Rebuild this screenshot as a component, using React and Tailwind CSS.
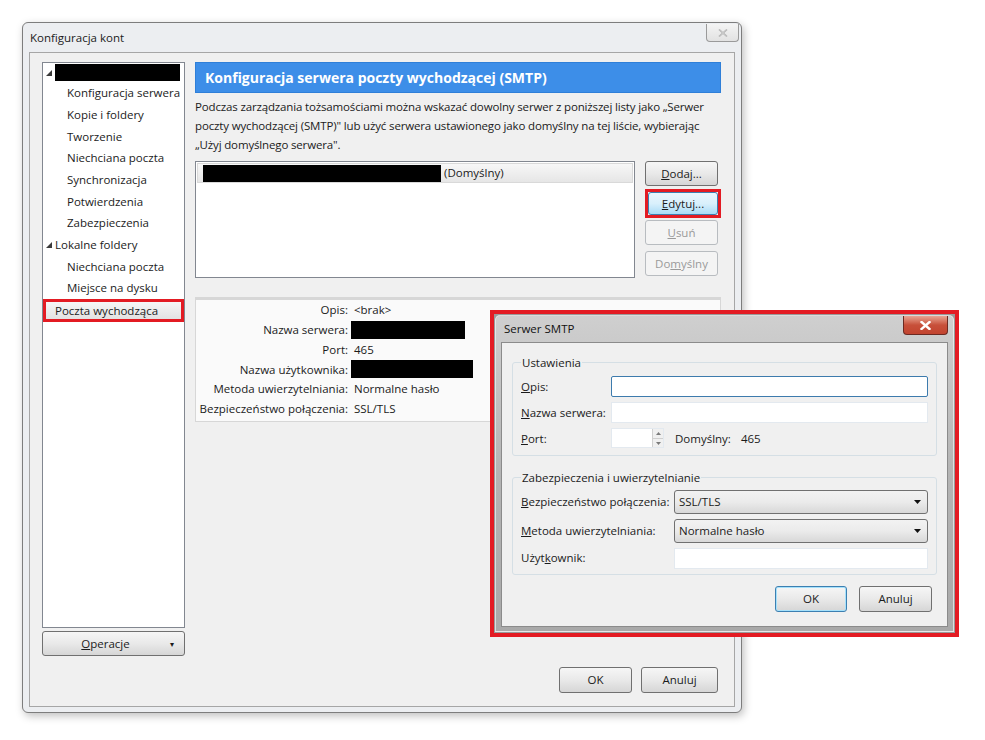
import { useState } from "react";

const font = "font-['Open_Sans','Noto_Sans',sans-serif]";

const Tri = ({ className = "" }) => (
  <svg width="6" height="6" viewBox="0 0 6 6" className={className}>
    <polygon points="6,0 6,6 0,6" fill="#3a3a3a" />
  </svg>
);

const Caret = () => (
  <svg width="7" height="4" viewBox="0 0 7 4">
    <polygon points="0,0 7,0 3.5,4" fill="#111" />
  </svg>
);

const Btn = ({ children, className = "", variant = "normal" }) => {
  const styles = {
    normal:
      "border-[#707070] bg-linear-to-b from-[#f6f6f6] via-[#e9e9e9] to-[#d6d6d6] text-[#1b1b1b]",
    disabled: "border-[#b8bcc0] bg-[#f4f4f4] text-[#9a9a9a]",
    hover:
      "border-[#3c7fb1] bg-linear-to-b from-[#eaf6fd] via-[#d9f0fc] to-[#a9dbf6] text-[#1b1b1b]",
    focus:
      "border-[#3c7fb1] bg-linear-to-b from-[#f6f6f6] via-[#e9e9e9] to-[#d6d6d6] text-[#1b1b1b] shadow-[inset_0_0_0_1px_#a6e1fb]",
  };
  return (
    <button
      className={`flex items-center justify-center rounded-[3px] border text-[11.5px] ${styles[variant]} ${className}`}
    >
      {children}
    </button>
  );
};

const treeItems = [
  { label: "Konfiguracja serwera", indent: true },
  { label: "Kopie i foldery", indent: true },
  { label: "Tworzenie", indent: true },
  { label: "Niechciana poczta", indent: true },
  { label: "Synchronizacja", indent: true },
  { label: "Potwierdzenia", indent: true },
  { label: "Zabezpieczenia", indent: true },
  { label: "Lokalne foldery", parent: true },
  { label: "Niechciana poczta", indent: true },
  { label: "Miejsce na dysku", indent: true },
];

const details = [
  ["Opis:", "<brak>"],
  ["Nazwa serwera:", null, "w-[114px]"],
  ["Port:", "465"],
  ["Nazwa użytkownika:", null, "w-[122px]"],
  ["Metoda uwierzytelniania:", "Normalne hasło"],
  ["Bezpieczeństwo połączenia:", "SSL/TLS"],
];

const SmtpDialog = () => (
  <div className="absolute left-[490px] top-[310px] w-[469px] h-[327px] border-[4px] border-[#e31b23] bg-[#9a9a9a] p-[1px]">
    <div className="flex h-full flex-col rounded-t-[5px] border border-[#f2f2f2]/70 bg-linear-to-b from-[#cfcfcf] via-[#b4b4b4] to-[#a9a9a9] px-[5px] pb-[4px]">
      <div className="flex h-[26px] items-start justify-between">
        <span className="pt-[4px] pl-[3px] text-[11.5px] text-[#111]">Serwer SMTP</span>
        <div className="flex h-[19px] w-[45px] items-center justify-center rounded-b-[4px] border border-t-0 border-[#6b2a22] bg-linear-to-b from-[#e8a493] via-[#c7503a] to-[#c2432f] text-white">
          <svg width="11" height="9" viewBox="0 0 11 9">
            <path d="M1.5 1 L9.5 8 M9.5 1 L1.5 8" stroke="#fff" strokeWidth="2.4" strokeLinecap="square" />
          </svg>
        </div>
      </div>
      <div className="flex flex-1 flex-col border border-[#8b8b8b] bg-[#f0f0f0] px-[10px] pt-[11px]">
        <fieldset className="rounded-[3px] border border-[#d5dfe5] px-[8px] pb-[4px]">
          <legend className="px-[1px] text-[11.5px] text-[#1b1b1b]">Ustawienia</legend>
          <div className="mt-[2px] flex flex-col text-[11.5px] text-[#1b1b1b]">
            <div className="flex h-[26px] items-center">
              <span className="w-[90px]"><span className="underline">O</span>pis:</span>
              <div className="h-[21px] w-[317px] rounded-[2px] border border-[#3d7bad] bg-white" />
            </div>
            <div className="flex h-[26px] items-center">
              <span className="w-[90px]"><span className="underline">N</span>azwa serwera:</span>
              <div className="h-[21px] w-[317px] border border-[#e3e9ef] bg-white" />
            </div>
            <div className="flex h-[26px] items-center">
              <span className="w-[90px]"><span className="underline">P</span>ort:</span>
              <div className="flex h-[20px] w-[53px] border border-[#e3e9ef] bg-white">
                <div className="flex-1" />
                <div className="flex w-[11px] flex-col border-l border-[#d0d0d0] bg-[#f0f0f0]">
                  <div className="flex flex-1 items-center justify-center border-b border-[#cfcfcf]">
                    <svg width="5" height="3" viewBox="0 0 5 3"><polygon points="0,3 5,3 2.5,0" fill="#7a7a7a" /></svg>
                  </div>
                  <div className="flex flex-1 items-center justify-center">
                    <svg width="5" height="3" viewBox="0 0 5 3"><polygon points="0,0 5,0 2.5,3" fill="#7a7a7a" /></svg>
                  </div>
                </div>
              </div>
              <span className="ml-[11px]">Domyślny:</span>
              <span className="ml-[10px]">465</span>
            </div>
          </div>
        </fieldset>
        <fieldset className="mt-[13px] rounded-[3px] border border-[#d5dfe5] px-[8px] pb-[5px]">
          <legend className="px-[1px] text-[11.5px] text-[#1b1b1b]">Zabezpieczenia i uwierzytelnianie</legend>
          <div className="mt-[3px] flex flex-col gap-[5px] text-[11.5px] text-[#1b1b1b]">
            <div className="flex items-center">
              <span className="w-[153px]"><span className="underline">B</span>ezpieczeństwo połączenia:</span>
              <div className="flex h-[24px] w-[254px] items-center justify-between rounded-[3px] border border-[#707070] bg-linear-to-b from-[#f2f2f2] via-[#ebebeb] to-[#d8d8d8] pl-[4px] pr-[6px]">
                <span>SSL/TLS</span>
                <Caret />
              </div>
            </div>
            <div className="flex items-center">
              <span className="w-[153px]"><span className="underline">M</span>etoda uwierzytelniania:</span>
              <div className="flex h-[24px] w-[254px] items-center justify-between rounded-[3px] border border-[#707070] bg-linear-to-b from-[#f2f2f2] via-[#ebebeb] to-[#d8d8d8] pl-[4px] pr-[6px]">
                <span>Normalne hasło</span>
                <Caret />
              </div>
            </div>
            <div className="flex items-center">
              <span className="w-[153px]">Użyt<span className="underline">k</span>ownik:</span>
              <div className="h-[21px] w-[254px] border border-[#e3e9ef] bg-white" />
            </div>
          </div>
        </fieldset>
        <div className="mt-[11px] flex justify-end gap-[12px] pr-[5px]">
          <Btn variant="focus" className="h-[26px] w-[72px]">OK</Btn>
          <Btn className="h-[26px] w-[73px]">Anuluj</Btn>
        </div>
      </div>
    </div>
  </div>
);

export default function App() {
  const [selected] = useState("Poczta wychodząca");
  return (
    <div className={`relative h-[740px] w-[985px] overflow-hidden bg-white pl-[22px] pt-[22px] ${font}`}>
      <div className="flex h-[691px] w-[720px] flex-col rounded-[6px] border border-[#7d7d7d] bg-[#eceef1] shadow-[2px_3px_8px_rgba(0,0,0,0.25)]">
        <div className="flex h-[29px] items-start justify-between pl-[7px] pr-[2px]">
          <span className="pt-[6px] text-[11.5px] text-[#1b1b1b]">Konfiguracja kont</span>
          <div className="mt-[1px] flex h-[18px] w-[33px] items-center justify-center rounded-b-[4px] border border-t-0 border-[#9a9a9a] bg-linear-to-b from-[#f4f4f4] to-[#e2e2e2]">
            <svg width="10" height="8" viewBox="0 0 10 8">
              <path d="M1 0.5 L9 7.5 M9 0.5 L1 7.5" stroke="#a4a4a4" strokeWidth="1.5" />
              <path d="M1 0.5 L9 7.5 M9 0.5 L1 7.5" stroke="#eee" strokeWidth="0.5" />
            </svg>
          </div>
        </div>
        <div className="mx-[6px] mb-[5px] flex flex-1 flex-col border border-[#a6a6a6] bg-[#f0f0f0] pl-[12px] pr-[16px] pt-[9px] pb-[13px]">
          <div className="flex gap-[10px]">
            {/* left tree */}
            <div className="flex w-[145px] flex-col gap-[3px]">
              <div className="flex h-[566px] flex-col border border-[#828790] bg-white pt-[1px] text-[11.5px] text-[#1b1b1b]">
                <div className="flex h-[17px] items-center pl-[3px]">
                  <Tri />
                  <div className="ml-[3px] h-[17px] w-[125px] bg-black" />
                </div>
                <div className="mt-[1px] flex flex-col">
                  {treeItems.map((it, i) => (
                    <div key={i} className="flex h-[21.7px] items-center">
                      {it.parent ? (
                        <div className="flex items-center pl-[3px]">
                          <Tri />
                          <span className="ml-[3px]">{it.label}</span>
                        </div>
                      ) : (
                        <span className="pl-[24px]">{it.label}</span>
                      )}
                    </div>
                  ))}
                  <div className="flex h-[23px] items-center border-[3px] border-[#e31b23] bg-linear-to-b from-[#f6f6f6] to-[#e2e2e2] pl-[9px]">
                    {selected}
                  </div>
                </div>
              </div>
              <Btn className="h-[25px] w-[143px] gap-[40px] pl-[28px]">
                <span>
                  <span className="underline">O</span>peracje
                </span>
                <span className="text-[8px]">▾</span>
              </Btn>
            </div>

            {/* right panel */}
            <div className="flex flex-1 flex-col">
              <div className="flex h-[31px] items-center border border-[#2f7fd8] bg-[#3d8ee8] pl-[9px] text-[14px] font-bold text-white">
                Konfiguracja serwera poczty wychodzącej (SMTP)
              </div>
              <p className="mt-[4px] text-[11.5px] leading-[19px] text-[#1b1b1b] tracking-[-0.15px]">
                Podczas zarządzania tożsamościami można wskazać dowolny serwer z poniższej listy jako „Serwer poczty wychodzącej (SMTP)" lub użyć serwera ustawionego jako domyślny na tej liście, wybierając „Użyj domyślnego serwera".
              </p>
              <div className="mt-[7px] flex gap-[10px]">
                <div className="h-[117px] w-[440px] border border-[#828790] bg-white p-[1px]">
                  <div className="flex h-[20px] items-center border border-[#d9d9d9] bg-linear-to-b from-[#f7f7f7] to-[#e6e6e6] pl-[5px] text-[11.5px] text-[#1b1b1b]">
                    <div className="h-[17px] w-[238px] bg-black" />
                    <span className="ml-[3px]">(Domyślny)</span>
                  </div>
                </div>
                <div className="flex flex-col">
                  <Btn className="h-[25px] w-[73px]">
                    <span><span className="underline">D</span>odaj...</span>
                  </Btn>
                  <div className="mt-[3px] border-[3px] border-[#e31b23]">
                    <Btn variant="hover" className="h-[23px] w-[70px]">
                      <span><span className="underline">E</span>dytuj...</span>
                    </Btn>
                  </div>
                  <Btn variant="disabled" className="mt-[2px] h-[25px] w-[73px]">
                    <span><span className="underline">U</span>suń</span>
                  </Btn>
                  <Btn variant="disabled" className="mt-[6px] h-[25px] w-[73px]">
                    <span>Do<span className="underline">m</span>yślny</span>
                  </Btn>
                </div>
              </div>
              <div className="mt-[19px] border border-t-[3px] border-[#d7d7d7] bg-[#fafafa] pb-[2px]">
                {details.map(([label, value, w], i) => (
                  <div key={i} className="flex h-[19.8px] items-center text-[11.5px] text-[#1b1b1b]">
                    <span className="w-[152px] text-right">{label}</span>
                    {value ? (
                      <span className="ml-[6px]">{value}</span>
                    ) : (
                      <div className={`ml-[3px] h-[18px] bg-black ${w}`} />
                    )}
                  </div>
                ))}
              </div>
            </div>
          </div>
          <div className="mt-auto flex justify-end gap-[9px]">
            <Btn className="h-[26px] w-[73px]">OK</Btn>
            <Btn className="h-[26px] w-[77px]">Anuluj</Btn>
          </div>
        </div>
      </div>
      <SmtpDialog />
    </div>
  );
}
